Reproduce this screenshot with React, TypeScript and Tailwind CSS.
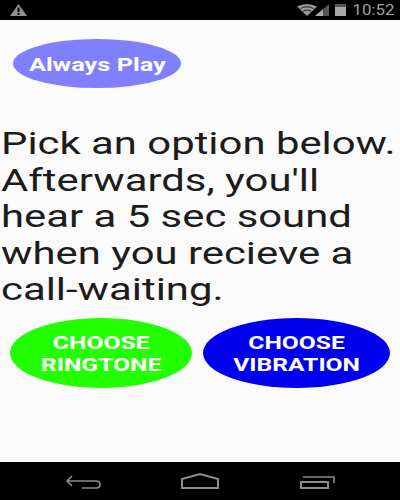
function Ellipse({ className, children }: { className: string; children: React.ReactNode }) {
  return (
    <div className={"rounded-[50%] flex items-center justify-center text-center text-white font-bold " + className}>
      <div className="scale-x-[1.333] whitespace-nowrap">{children}</div>
    </div>
  );
}

export default function App() {
  return (
    <div className="w-[400px] h-[500px] flex flex-col bg-[#fafafa] overflow-hidden font-['Roboto','Liberation_Sans',sans-serif]">
      <div className="h-5 bg-black flex items-center justify-between shrink-0">
        <svg width="17" height="12" viewBox="0 0 17 12" className="ml-[10px]">
          <path d="M8.5 0 L17 12 H0 Z" fill="#8f8f8f" />
          <rect x="7.5" y="3.5" width="2" height="4.5" fill="#000" />
          <rect x="7.5" y="9" width="2" height="2" fill="#000" />
        </svg>
        <div className="flex items-center">
          <svg width="20" height="12" viewBox="0 0 20 12" className="-mr-[2px]">
            <path d="M0 2.5 Q10 -2.5 20 2.5 L10 12 Z" fill="#9a9a9a" />
            <path d="M3.5 4.5 Q10 1 16.5 4.5" stroke="#222" strokeWidth="1" fill="none" />
            <path d="M6 7 Q10 5 14 7" stroke="#222" strokeWidth="1" fill="none" />
          </svg>
          <svg width="14" height="12" viewBox="0 0 14 12" className="mr-[6px]">
            <path d="M14 0 V12 H0 Z" fill="#555" />
            <path d="M8 5.2 V12 H0 Z" fill="#aaa" />
          </svg>
          <div className="w-[11px] h-[12px] bg-[#a8a8a8] relative mr-[7px]">
            <div className="absolute top-0 left-0 w-full h-[3px] bg-[#555]" />
          </div>
          <span className="w-[40px] mr-[7px] text-center text-[#a0a0a0] text-[14px] leading-none">
            <span className="inline-block scale-x-[1.2]">10:52</span>
          </span>
        </div>
      </div>
      <div className="flex-1 flex flex-col">
        <Ellipse className="mt-[19px] ml-[13px] w-[168px] h-[49px] pt-[3px] bg-[#8080ff] text-[19px]">Always Play</Ellipse>
        <div className="mt-[38px] ml-[1px] text-[#1c1c1c] text-[31.4px] leading-[36.5px] whitespace-nowrap origin-left scale-x-[1.333]">
          <div>Pick an option below.</div>
          <div>Afterwards, you'll</div>
          <div>hear a 5 sec sound</div>
          <div>when you recieve a</div>
          <div>call-waiting.</div>
        </div>
        <div className="mt-[9px] flex">
          <Ellipse className="ml-[10px] w-[182px] h-[70px] pt-[2px] bg-[#22ff00] text-[18.5px] leading-[22px]">
            CHOOSE<br />RINGTONE
          </Ellipse>
          <Ellipse className="ml-[11px] w-[187px] h-[70px] pt-[2px] bg-[#0000ee] text-[18.5px] leading-[22px]">
            CHOOSE<br />VIBRATION
          </Ellipse>
        </div>
      </div>
      <div className="h-[38px] bg-black flex items-center shrink-0">
        <svg width="320" height="38" viewBox="0 0 320 38" className="ml-[40px]" fill="none" stroke="#8c8c8c" strokeWidth="1.6">
          <path d="M32 14 L27 19 L32 24 M27 19 H56 Q60 19 60 22.5 Q60 26 56 26 H42" />
          <path d="M142 26 V17 L160 12 L178 17 V26 Z" strokeWidth="2" />
          <rect x="261" y="20" width="27" height="6" strokeWidth="2" />
          <path d="M263 15 H294 V21" />
        </svg>
      </div>
    </div>
  );
}
